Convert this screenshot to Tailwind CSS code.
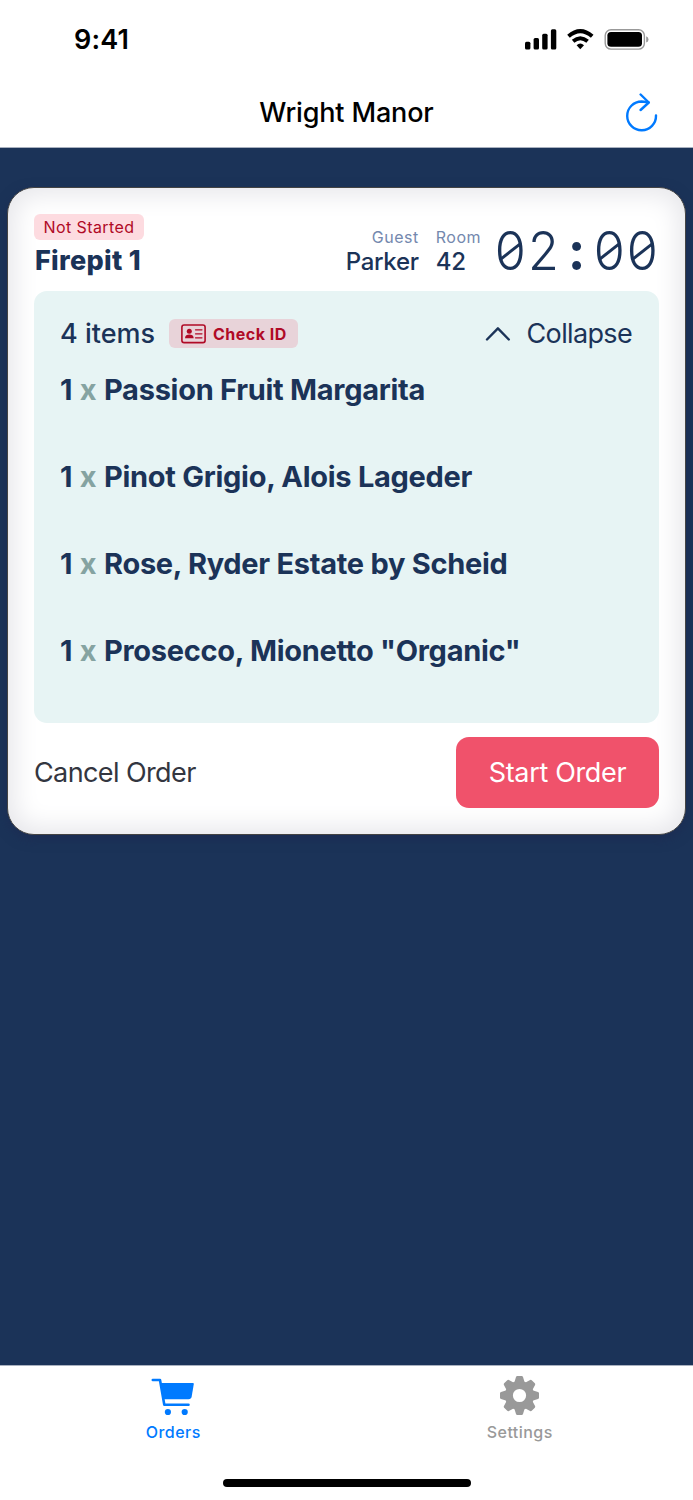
<!DOCTYPE html>
<html lang="en">
<head>
  <meta charset="UTF-8" />
  <title>Wright Manor</title>
  <meta name="viewport" content="width=device-width, initial-scale=1" />
  <script src="https://cdn.jsdelivr.net/npm/@tailwindcss/browser@4"></script>
</head>
<body class="bg-[#1b3358] font-['Inter',sans-serif] text-[#1b3358]">
  <div class="flex flex-col w-[693px] h-[1500px] overflow-hidden whitespace-nowrap">

    <!-- Status bar -->
    <div class="flex items-center justify-between h-[78px] pl-[74px] pr-[44px] bg-white text-black shrink-0">
      <span class="pt-[2px] text-[27px] leading-[32px] font-semibold tracking-[0.2px]">9:41</span>
      <svg class="w-[125px] h-[24px]" viewBox="524 27 125 24">
        <rect x="525" y="41.7" width="5.4" height="7.8" rx="1.5" />
        <rect x="533.6" y="38" width="5.4" height="11.5" rx="1.5" />
        <rect x="542.2" y="33.7" width="5.4" height="15.8" rx="1.5" />
        <rect x="550.9" y="29.3" width="5.4" height="20.2" rx="1.5" />
        <path d="M568.5 36.2Q580.3 26 592.2 36.2" fill="none" stroke="#000" stroke-width="4" />
        <path d="M573.1 41.3Q580.3 35 587.6 41.3" fill="none" stroke="#000" stroke-width="3.8" />
        <path d="M576.6 45.2Q580.3 41.8 584 45.2L580.3 49.2Z" />
        <rect x="605.2" y="29.7" width="39.2" height="19.4" rx="5.8" fill="none" stroke="#999" stroke-width="1.4" />
        <rect x="607.4" y="32" width="34.6" height="14.8" rx="3.6" />
        <path d="M646.2 36.3Q648.5 37.2 648.5 39.4T646.2 42.5Z" fill="#999" />
      </svg>
    </div>

    <!-- Nav bar -->
    <div class="grid grid-cols-[1fr_auto_1fr] items-center h-[70px] bg-white text-black border-b border-[#a9b1bf] shrink-0">
      <span></span>
      <h1 class="text-[27px] leading-[32px] font-medium tracking-[-0.15px]">Wright Manor</h1>
      <svg class="justify-self-end mr-[34px] w-[34px] h-[40px]" viewBox="625 93 34 40" fill="none" stroke="#007aff" stroke-width="2.4" stroke-linecap="round" stroke-linejoin="round">
        <path d="M656 115.5A14.4 14.4 0 1 1 641.6 101.5L648.5 102.3" />
        <path d="M640.6 94.5L648.8 102.5L640.6 110" />
      </svg>
    </div>

    <main class="flex-1 px-[7px] pt-[39px]">
      <!-- Order card -->
      <section class="h-[648px] rounded-[27px] border border-[#444] bg-white px-[26px] pt-[26px] shadow-[inset_0_0_26px_6px_#e6e6ea,0_4px_12px_rgba(28,40,80,0.6)]">
        <div class="flex h-[77px]">
          <div>
            <div class="flex items-center justify-center w-[110px] h-[26px] rounded-[6px] bg-[#fddbe0] text-[#b00a26] text-[16px] tracking-[0.4px]">Not Started</div>
            <h2 class="pt-[5px] pl-[1px] text-[27px] leading-[32px] font-extrabold tracking-[0.3px]">Firepit 1</h2>
          </div>
          <div class="flex ml-auto pt-[13px]">
            <div class="text-right">
              <div class="text-[16px] leading-[20px] tracking-[0.5px] text-[#7488ae]">Guest</div>
              <div class="text-[24px] leading-[29px] tracking-[-0.3px] font-medium">Parker</div>
            </div>
            <div class="ml-[17px]">
              <div class="text-[16px] leading-[20px] tracking-[0.5px] text-[#7488ae]">Room</div>
              <div class="text-[24px] leading-[29px] tracking-[-0.3px] font-medium">42</div>
            </div>
          </div>
          <!-- Countdown -->
          <div class="flex ml-[13px] pt-[10px] text-[53px] leading-[54px] font-light">
            <span class="relative w-[33px] h-[54px] flex justify-center"><span class="scale-x-[0.95]">0</span><i class="absolute left-[3px] top-[26px] w-[27px] h-[3px] bg-current -rotate-38"></i></span>
            <span class="w-[33px] flex justify-center scale-x-[0.95]">2</span>
            <span class="w-[33px] flex justify-center font-bold">:</span>
            <span class="relative w-[33px] h-[54px] flex justify-center"><span class="scale-x-[0.95]">0</span><i class="absolute left-[3px] top-[26px] w-[27px] h-[3px] bg-current -rotate-38"></i></span>
            <span class="relative w-[33px] h-[54px] flex justify-center"><span class="scale-x-[0.95]">0</span><i class="absolute left-[3px] top-[26px] w-[27px] h-[3px] bg-current -rotate-38"></i></span>
          </div>
        </div>

        <!-- Items -->
        <div class="h-[432px] rounded-[13px] bg-[#e7f4f4] px-[26px] pt-[28px]">
          <div class="flex items-center h-[29px]">
            <span class="text-[27px] leading-[29px] font-medium">4 items</span>
            <div class="ml-[14px] flex items-center w-[129px] h-[29px] rounded-[6px] bg-[#e8d3d9] pl-[12px] text-[#b00a26]">
              <svg class="w-[25px] h-[20px]" viewBox="0 0 25 20">
                <rect x="0.9" y="1" width="23.2" height="17.6" rx="2.2" fill="none" stroke="currentColor" stroke-width="1.6" />
                <circle cx="8.3" cy="7.2" r="2.5" fill="currentColor" />
                <path d="M4 14.2C4 11.5 6 10.5 8.3 10.5S12.7 11.5 12.7 14.2Z" fill="currentColor" />
                <path d="M14.5 5.8H21M14.5 9.8H21M14.5 13.8H21" stroke="currentColor" stroke-width="1.2" stroke-linecap="round" />
              </svg>
              <span class="ml-[7px] text-[16px] font-bold tracking-[0.5px]">Check ID</span>
            </div>
            <svg class="ml-auto w-[26px] h-[16px]" viewBox="0 0 26 16" fill="none" stroke="#1b3358" stroke-width="2.4" stroke-linecap="round" stroke-linejoin="round">
              <path d="M2 13.5L12.9 2.3L23.8 13.5" />
            </svg>
            <span class="ml-[16px] mr-px text-[27px] leading-[29px] tracking-[-0.65px]">Collapse</span>
          </div>
          <ul class="pt-[24px] text-[29px] leading-[36px] font-bold tracking-[-0.28px] flex flex-col gap-[51px]">
            <li><span>1</span> <span class="mx-px text-[#85a3a1]">x</span> <span>Passion Fruit Margarita</span></li>
            <li><span>1</span> <span class="mx-px text-[#85a3a1]">x</span> <span>Pinot Grigio, Alois Lageder</span></li>
            <li><span>1</span> <span class="mx-px text-[#85a3a1]">x</span> <span>Rose, Ryder Estate by Scheid</span></li>
            <li><span>1</span> <span class="mx-px text-[#85a3a1]">x</span> <span>Prosecco, Mionetto "Organic"</span></li>
          </ul>
        </div>

        <!-- Actions -->
        <div class="flex items-center justify-between pt-[14px]">
          <button class="pt-[2px] text-[27px] text-[#333640] tracking-[-0.6px]">Cancel Order</button>
          <button class="w-[203px] h-[71px] pt-[2px] rounded-[13px] bg-[#f0526b] text-white text-[27px] tracking-[-0.35px]">Start Order</button>
        </div>
      </section>
    </main>

    <!-- Tab bar -->
    <nav class="relative grid grid-cols-2 h-[135px] bg-white border-t border-[#a9b1bf] pt-[9px] shrink-0">
      <div class="flex flex-col items-center text-[#007aff]">
        <svg class="w-[44px] h-[42px]" viewBox="151 1375 44 42">
          <path d="M152.8 1380H160L164.3 1404.7H188.5" fill="none" stroke="currentColor" stroke-width="2.6" stroke-linecap="round" stroke-linejoin="round" />
          <path d="M161 1383H193Q193.9 1383 193.8 1384L191.7 1396.5Q191.2 1399.2 188.5 1399.2H163.5Z" fill="currentColor" />
          <circle cx="167.9" cy="1412" r="3.1" fill="currentColor" />
          <circle cx="184.7" cy="1412" r="3.1" fill="currentColor" />
        </svg>
        <span class="mt-[5px] text-[16px] leading-[20px] font-medium tracking-[0.45px]">Orders</span>
      </div>
      <div class="flex flex-col items-center text-[#999]">
        <svg class="w-[42px] h-[42px]" viewBox="-20.5 -20.5 42 42" fill="currentColor">
          <defs><path id="tooth" d="M-5.5 -12L-3.5 -18.5Q-3.2 -19.5 -2.2 -19.5H2.2Q3.2 -19.5 3.5 -18.5L5.5 -12Z" /></defs>
          <circle r="10.6" fill="none" stroke="currentColor" stroke-width="8" />
          <use href="#tooth" />
          <use href="#tooth" transform="rotate(45)" />
          <use href="#tooth" transform="rotate(90)" />
          <use href="#tooth" transform="rotate(135)" />
          <use href="#tooth" transform="rotate(180)" />
          <use href="#tooth" transform="rotate(225)" />
          <use href="#tooth" transform="rotate(270)" />
          <use href="#tooth" transform="rotate(315)" />
        </svg>
        <span class="mt-[5px] text-[16px] leading-[20px] font-medium tracking-[0.45px]">Settings</span>
      </div>
      <div class="absolute left-[223px] bottom-[13px] w-[248px] h-[8px] rounded-full bg-black"></div>
    </nav>
  </div>
</body>
</html>
